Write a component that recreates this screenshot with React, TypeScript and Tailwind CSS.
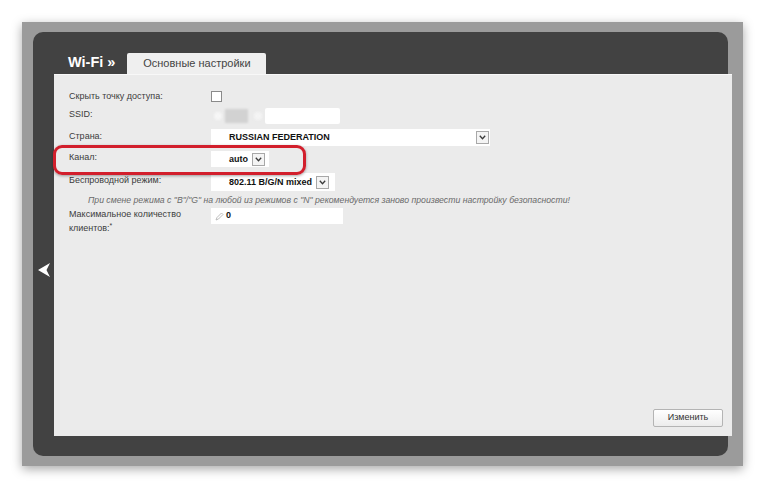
import type { ReactNode } from 'react'

function Row({
  label,
  h,
  labelPt,
  ctrlPt,
  children,
}: {
  label: ReactNode
  h: string
  labelPt: string
  ctrlPt: string
  children?: ReactNode
}) {
  return (
    <div className={`flex items-start ${h}`}>
      <div className={`w-[142px] shrink-0 text-[9px] leading-[12px] text-[#3c3c3c] ${labelPt}`}>{label}</div>
      <div className={`flex ${ctrlPt}`}>{children}</div>
    </div>
  )
}

function DropBtn() {
  return (
    <span className="flex h-[13px] w-[13px] shrink-0 items-center justify-center border border-[#a8a8a8] bg-[#f4f4f4]">
      <svg width="7" height="5" viewBox="0 0 7 5">
        <path d="M0.8 0.8 L3.5 3.8 L6.2 0.8" fill="none" stroke="#3a3a3a" strokeWidth="1.3" />
      </svg>
    </span>
  )
}

export default function App() {
  return (
    <div className="h-[489px] w-[765px] overflow-hidden bg-white pl-[22px] pt-[22px] font-['Liberation_Sans',Arial,sans-serif]">
      <div className="h-[444px] w-[721px] bg-[#9b9b9b] pl-[11px] pt-[10px] shadow-[0_3px_10px_rgba(0,0,0,0.35)]">
        <div className="flex h-[424px] w-[695px] flex-col rounded-[10px] bg-[#424242]">
          {/* tab bar */}
          <div className="flex h-[42px] shrink-0 items-end pl-[35px]">
            <div className="mb-[5px] text-[14.5px] font-bold leading-none text-white">Wi-Fi »</div>
            <div className="ml-[12px] flex h-[21px] w-[139px] items-center justify-center rounded-t-[2px] bg-[#efefef] text-[11px] text-[#444]">
              Основные настройки
            </div>
          </div>

          <div className="flex min-h-0 flex-1 pb-[20px]">
            <div className="flex w-[21px] shrink-0 items-center justify-center pt-[30px]">
              <svg width="14" height="16" viewBox="0 0 14 16">
                <path d="M13 1 L1 8 L13 15 L9.5 8 Z" fill="#fff" />
              </svg>
            </div>

            <div className="relative -mr-[4px] flex flex-1 flex-col border-t border-[#f8f8f8] bg-[#ebebeb] pl-[15px] pt-[12px]">
              <Row label="Скрыть точку доступа:" h="h-[18px]" labelPt="pt-[3px]" ctrlPt="pt-[4px]">
                <span className="h-[11px] w-[11px] border border-[#8a8a8a] bg-white" />
              </Row>
              <Row label="SSID:" h="h-[18px]" labelPt="pt-[3px]" ctrlPt="pt-[3px]">
                <div className="flex h-[16px] items-center">
                  <span className="ml-[3px] h-[8px] w-[8px] rounded-full bg-[#f6f6f6] blur-[1px]" />
                  <span className="ml-[3px] h-[14px] w-[23px] bg-[#d2d2d2] blur-[1px]" />
                  <span className="ml-[6px] h-[8px] w-[8px] rounded-full bg-[#f4f4f4] blur-[1px]" />
                  <span className="ml-[3px] h-[16px] w-[75px] rounded-[2px] bg-white blur-[0.5px]" />
                </div>
              </Row>
              <Row label="Страна:" h="h-[25px]" labelPt="pt-[7px]" ctrlPt="pt-[6px]">
                <div className="flex h-[17px] w-[279px] items-center justify-between bg-white pl-[18px] pr-[1px]">
                  <span className="whitespace-nowrap text-[9px] font-bold text-[#111]">RUSSIAN FEDERATION</span>
                  <DropBtn />
                </div>
              </Row>
              <Row label="Канал:" h="h-[21px]" labelPt="pt-[3px]" ctrlPt="pt-[3px]">
                <div className="flex h-[16px] w-[58px] items-center bg-white pl-[18px]">
                  <span className="mr-[4px] pt-[2px] text-[9px] font-bold text-[#111]">auto</span>
                  <DropBtn />
                </div>
              </Row>
              <Row label="Беспроводной режим:" h="h-[22px]" labelPt="pt-[5px]" ctrlPt="pt-[4px]">
                <div className="flex h-[18px] w-[124px] items-center bg-white pl-[18px]">
                  <span className="mr-[4px] whitespace-nowrap pt-[1px] text-[9px] font-bold text-[#111]">802.11 B/G/N mixed</span>
                  <DropBtn />
                </div>
              </Row>
              <div className="h-[16px] whitespace-nowrap pl-[19px] pt-[3px] text-[8.7px] italic leading-[12px] text-[#6a6a6a]">
                При смене режима с "B"/"G" на любой из режимов с "N" рекомендуется заново произвести настройку безопасности!
              </div>
              <Row
                label={
                  <>
                    Максимальное количество
                    <br />
                    клиентов:<sup className="text-[7px]">*</sup>
                  </>
                }
                h="h-[30px]"
                labelPt="pt-[0px] leading-[14px]"
                ctrlPt="pt-[1px]"
              >
                <div className="flex h-[16px] w-[132px] items-center bg-white pl-[4px]">
                  <svg width="9" height="9" viewBox="0 0 9 9">
                    <path d="M1 8 L2 5.5 L6.5 1 L8 2.5 L3.5 7 Z" fill="none" stroke="#b5b5b5" strokeWidth="0.9" />
                  </svg>
                  <span className="ml-[2px] text-[9px] font-bold text-[#111]">0</span>
                </div>
              </Row>

              <div className="mt-auto mb-[9px] mr-[9px] self-end">
                <button
                  type="button"
                  className="flex h-[18px] w-[70px] items-center justify-center rounded-[2px] border border-[#b4b4b4] bg-gradient-to-b from-white to-[#ececec] text-[9px] text-[#333]"
                >
                  Изменить
                </button>
              </div>

              {/* red highlight over the channel row */}
              <div className="pointer-events-none absolute left-[-1px] top-[70px] h-[30px] w-[253px] rounded-[9px] border-[3px] border-[#d21f2c] shadow-[0_1px_3px_rgba(0,0,0,0.35)]" />
            </div>
          </div>
        </div>
      </div>
    </div>
  )
}
